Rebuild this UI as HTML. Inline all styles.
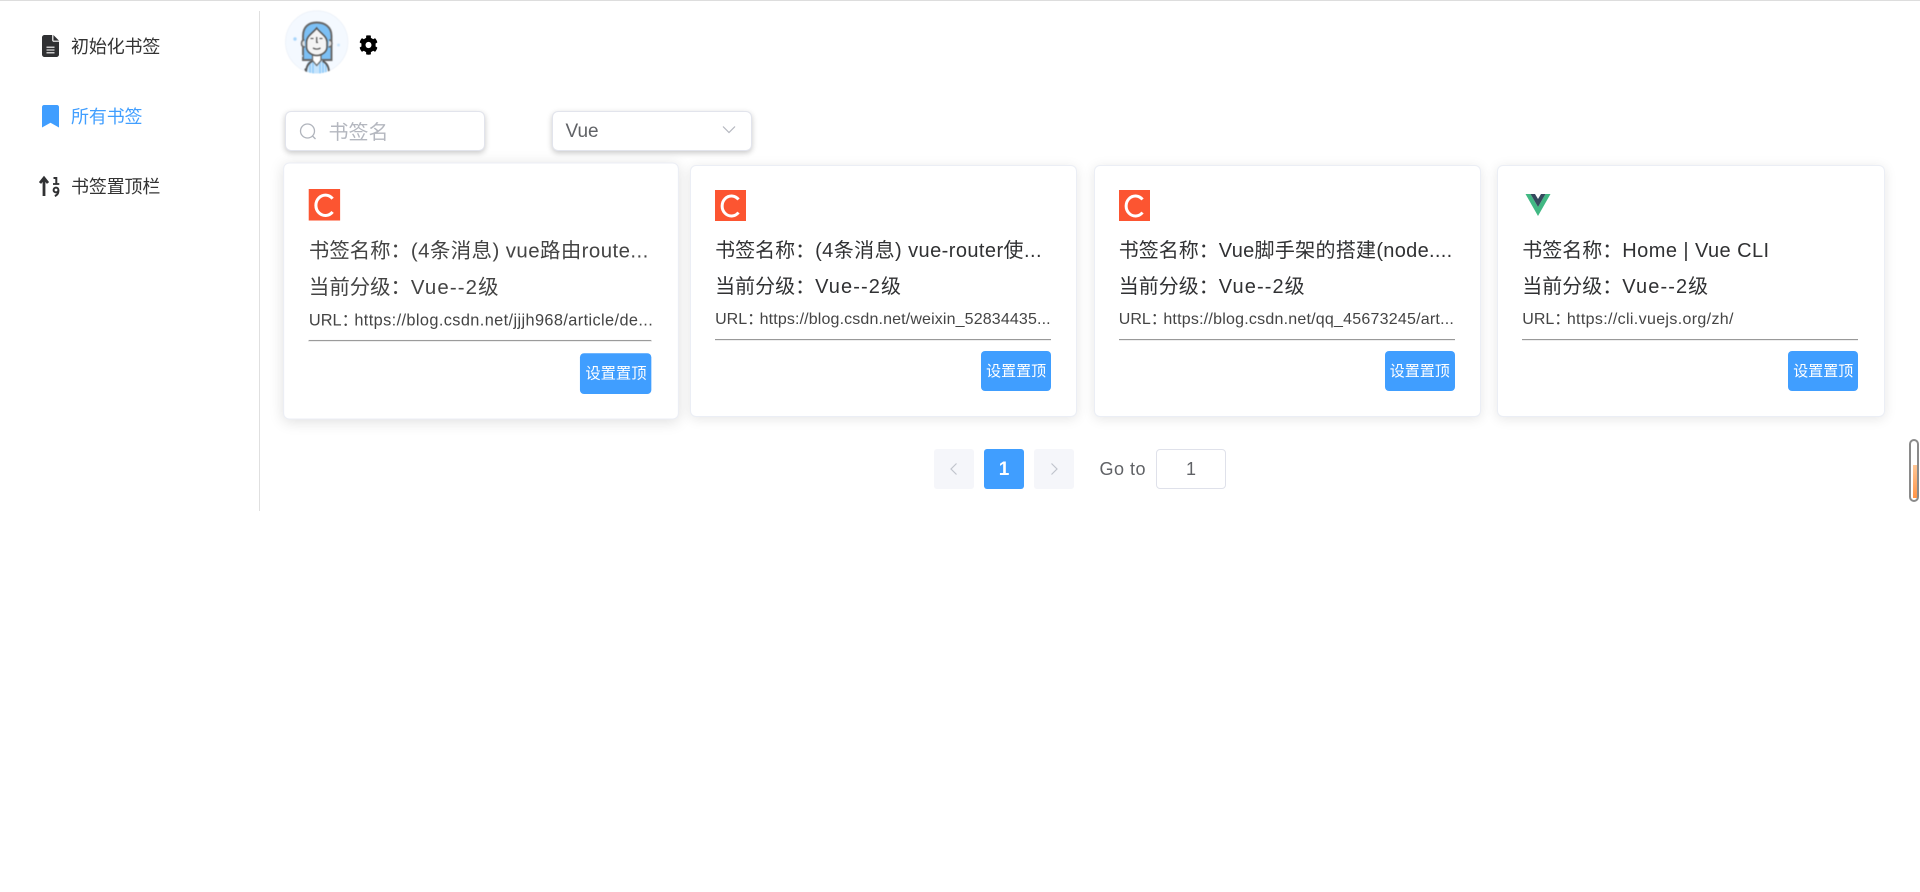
<!DOCTYPE html>
<html lang="zh">
<head>
<meta charset="utf-8">
<title>书签</title>
<style>
html,body{margin:0;padding:0;width:1920px;height:892px;overflow:hidden;background:#fff}
body{position:relative;font-family:"Liberation Sans","Noto Sans CJK SC",sans-serif;color:#303133}
.a,.card,.card>*{position:absolute}
.t{white-space:nowrap}
.nav{left:71px;font-size:18px;letter-spacing:-.15px;line-height:30px;height:30px;white-space:nowrap;color:#333}
.card{top:164.5px;width:385.6px;height:250px;background:#fff;border:1px solid #ebeef5;border-radius:6px;box-shadow:0 2px 12px rgba(0,0,0,.1)}
.ic{left:24.3px;top:24.5px;width:31px;height:31px}
.ti{left:24.3px;top:70.5px;font-size:20px;line-height:30px;white-space:nowrap}
.ti span{letter-spacing:.43px}
.le{left:24.3px;top:106.5px;font-size:20px;line-height:30px;white-space:nowrap}
.le span{letter-spacing:1.1px}
.ur{left:24.3px;top:139.5px;font-size:16px;line-height:30px;white-space:nowrap;color:#444}
.ur b{font-weight:400;margin-right:-3.5px}
.hr{left:24.3px;top:173px;width:336px;height:1px;background:#999;border-bottom:1px solid #eee}
.bt{left:290.3px;top:185.5px;width:70px;height:40px;background:#409eff;color:#fff;border-radius:4px;font-size:15px;line-height:42px;text-align:center;white-space:nowrap}
.inp{top:111px;height:38px;background:#fff;border:1px solid #e2e4ec;border-radius:6px;box-shadow:0 2px 6px rgba(0,0,0,.22)}
.pg{top:449px;width:40px;height:40px;border-radius:3px;background:#f5f6fa}
</style>
</head>
<body>
<div class="a" style="left:0;top:0;width:1920px;height:1px;background:#ddd"></div>
<div class="a" style="left:259px;top:11px;width:1px;height:500px;background:#e0e0e0"></div>

<svg class="a" style="left:41.7px;top:35px" width="17" height="22" viewBox="0 0 17 22"><path fill="#303133" d="M2.500 0H10.200V5.200c0 .9.700 1.600 1.600 1.600H17V19.500c0 1.400-1.100 2.500-2.500 2.500h-12C1.100 22 0 20.900 0 19.500v-17C0 1.100 1.100 0 2.500 0zM11.400 0L17 5.600H11.400z"/><path d="M4.500 12.200h8M4.500 15h8M4.500 17.800h8" stroke="#fff" stroke-width="1.100"/></svg>
<div class="a nav" style="top:32px">初始化书签</div>
<svg class="a" style="left:41.7px;top:105px" width="17" height="22.500" viewBox="0 0 17 22.500"><path fill="#409eff" d="M0 22.500V2C0 .9.900 0 2 0H15c1.100 0 2 .9 2 2V22.500L8.500 17.800Z"/></svg>
<div class="a nav" style="top:102px;color:#409eff">所有书签</div>
<svg class="a" style="left:38px;top:175px" width="23" height="22" viewBox="0 0 23 22"><path d="M6 21V3.500M2 8L6 3l4 5" fill="none" stroke="#303133" stroke-width="2.800"/><path d="M15.500 3h2.800v5.800" fill="none" stroke="#303133" stroke-width="2"/><path d="M15 9h6.300" stroke="#303133" stroke-width="1.800"/><circle cx="18" cy="15" r="2.400" fill="none" stroke="#303133" stroke-width="2"/><path d="M20.400 15.500c0 2.800-1.400 4.800-3.600 5.500" fill="none" stroke="#303133" stroke-width="2"/></svg>
<div class="a nav" style="top:172px">书签置顶栏</div>

<svg class="a" style="left:285px;top:10px;filter:blur(.4px)" width="64" height="64" viewBox="285 10 64 64">
<defs><clipPath id="cl"><circle cx="316.7" cy="42" r="31.5"/></clipPath></defs>
<circle cx="316.7" cy="42" r="31.5" fill="#f4f9ff"/>
<circle cx="316.7" cy="42" r="31.2" fill="none" stroke="#e8eef6" stroke-width=".6"/>
<g clip-path="url(#cl)">
<path d="M303 60V36c0-9 5.500-13.500 13.700-13.500S331.500 27 331.500 36v24z" fill="#7cc0f5" stroke="#666" stroke-width="1.900"/>
<path d="M306 74l1.500-12 9-4 9 4 1.500 12z" fill="#c6e4fc"/>
<path d="M310 62v12M313 60v14M320 60v14M323 62v12M326 63v11" stroke="#86c6f7" stroke-width="1.200"/>
<path d="M306 73c0-6 2-10 6.500-12M329 73c0-6-2-10-6.500-12" fill="none" stroke="#555" stroke-width="1.800"/>
<path d="M312.500 55v5.500l4.200 5 4.300-5V55z" fill="#fff" stroke="#666" stroke-width="1.200"/>
<path d="M306.500 42C306.500 36 313 33 316.700 28 320 33 327 36 327 42V47C327 52 321.500 55.500 316.700 55.500 312 55.500 306.500 52 306.500 47Z" fill="#f4f4f4" stroke="#555" stroke-width="1.500"/>
<path d="M304.500 40c-2 0-3 1-3 3.500s1.500 3.500 3.500 3.500M329 40c2 0 3 1 3 3.500s-1.500 3.500-3.500 3.500" fill="#ddd" stroke="#666" stroke-width="1.400"/>
<path d="M310.500 38.500h3M319.500 38.500h3M316.700 37v5.500h1.300M313 48c2 1.500 5.500 1.500 7.500 0" fill="none" stroke="#444" stroke-width="1.100"/>
</g>
<circle cx="295" cy="39" r="1.700" fill="#a9d6fb"/><circle cx="338.500" cy="45" r="1.500" fill="#cfe8fd"/><circle cx="302" cy="56" r="1" fill="#d5ebfd"/>
<circle cx="305.500" cy="69.500" r="1.100" fill="#555"/>
</svg>
<svg class="a" style="left:359px;top:35px" width="19" height="20" viewBox="0 0 512 512" preserveAspectRatio="none"><path fill="#000" d="M487.4 315.7l-42.6-24.6c4.3-23.2 4.3-47 0-70.2l42.6-24.6c4.9-2.8 7.1-8.6 5.5-14-11.1-35.6-30-67.8-54.7-94.6-3.8-4.1-10-5.1-14.8-2.3L380.8 110c-17.9-15.4-38.5-27.3-60.8-35.1V25.8c0-5.6-3.9-10.5-9.4-11.7-36.7-8.2-74.3-7.8-109.2 0-5.5 1.2-9.4 6.1-9.4 11.7V75c-22.2 7.9-42.8 19.8-60.8 35.1L88.7 85.5c-4.9-2.8-11-1.9-14.8 2.3-24.7 26.7-43.6 58.9-54.7 94.6-1.7 5.4.6 11.2 5.5 14L67.3 221c-4.3 23.2-4.3 47 0 70.2l-42.6 24.6c-4.9 2.8-7.1 8.6-5.5 14 11.1 35.6 30 67.8 54.7 94.6 3.8 4.1 10 5.1 14.8 2.3l42.6-24.6c17.9 15.4 38.5 27.3 60.8 35.1v49.2c0 5.6 3.9 10.5 9.4 11.7 36.7 8.2 74.3 7.8 109.2 0 5.5-1.2 9.4-6.1 9.4-11.700v-49.2c22.2-7.9 42.8-19.8 60.8-35.1l42.6 24.6c4.9 2.8 11 1.9 14.8-2.3 24.7-26.7 43.6-58.9 54.7-94.6 1.5-5.5-.7-11.3-5.6-14.1zM256 336c-44.1 0-80-35.9-80-80s35.9-80 80-80 80 35.9 80 80-35.9 80-80 80z"/></svg>

<div class="a inp" style="left:285px;width:197.500px"></div>
<svg class="a" style="left:298px;top:122px" width="20" height="20" viewBox="0 0 20 20"><circle cx="9.500" cy="9" r="7" fill="none" stroke="#b0b4bc" stroke-width="1.300"/><path d="M14.500 14l3 3" stroke="#b0b4bc" stroke-width="1.300"/></svg>
<div class="a t" style="left:328.500px;top:117px;font-size:20px;line-height:32px;color:#b4b7bf">书签名</div>

<div class="a inp" style="left:552px;width:197.500px"></div>
<div class="a t" style="left:565.500px;top:117px;font-size:19px;line-height:30px;color:#606266">Vue</div>
<svg class="a" style="left:721px;top:124px" width="16" height="12" viewBox="0 0 16 12"><path d="M2 2.500l6 6 6-6" fill="none" stroke="#b5b8c0" stroke-width="1.200"/></svg>

<div class="card" style="left:286.800px;transform:scale(1.02);box-shadow:0 2px 14px rgba(0,0,0,.13)">
<svg class="ic" viewBox="0 0 31 31"><rect width="31" height="31" fill="#fc5531"/><path d="M23.500 9.500A9.300 10 0 1 0 23.500 22.500" fill="none" stroke="#fff" stroke-width="3"/></svg>
<div class="ti" style="color:#444">书签名称：<span>(4条消息) vue路由route...</span></div>
<div class="le" style="color:#444">当前分级：<span>Vue--2级</span></div>
<div class="ur"><b>URL：</b><span style="letter-spacing:.38px">https://blog.csdn.net/jjjh968/article/de...</span></div>
<div class="hr"></div>
<div class="bt">设置置顶</div>
</div>

<div class="card" style="left:689.800px">
<svg class="ic" viewBox="0 0 31 31"><rect width="31" height="31" fill="#fc5531"/><path d="M23.500 9.500A9.300 10 0 1 0 23.500 22.500" fill="none" stroke="#fff" stroke-width="3"/></svg>
<div class="ti">书签名称：<span>(4条消息) vue-router使...</span></div>
<div class="le">当前分级：<span>Vue--2级</span></div>
<div class="ur"><b>URL：</b><span style="letter-spacing:.14px">https://blog.csdn.net/weixin_52834435...</span></div>
<div class="hr"></div>
<div class="bt">设置置顶</div>
</div>

<div class="card" style="left:1093.500px">
<svg class="ic" viewBox="0 0 31 31"><rect width="31" height="31" fill="#fc5531"/><path d="M23.500 9.500A9.300 10 0 1 0 23.500 22.500" fill="none" stroke="#fff" stroke-width="3"/></svg>
<div class="ti">书签名称：<span style="letter-spacing:.3px">Vue脚手架的搭建(node....</span></div>
<div class="le">当前分级：<span>Vue--2级</span></div>
<div class="ur"><b>URL：</b><span style="letter-spacing:.22px">https://blog.csdn.net/qq_45673245/art...</span></div>
<div class="hr"></div>
<div class="bt">设置置顶</div>
</div>

<div class="card" style="left:1497px">
<svg class="ic" viewBox="0 0 31 31"><path fill="#41b883" d="M3.500 4H8.500L16 17 23.500 4H28.500L16 26Z"/><path fill="#35495e" d="M8.500 4H13L16 9 19 4H23.500L16 17Z"/></svg>
<div class="ti">书签名称：<span>Home | Vue CLI</span></div>
<div class="le">当前分级：<span>Vue--2级</span></div>
<div class="ur"><b>URL：</b><span style="letter-spacing:.35px">https://cli.vuejs.org/zh/</span></div>
<div class="hr"></div>
<div class="bt">设置置顶</div>
</div>

<div class="a pg" style="left:934px"></div>
<svg class="a" style="left:949px;top:462px" width="10" height="14" viewBox="0 0 10 14"><path d="M7.500 1.500L2 7l5.500 5.500" fill="none" stroke="#c0c4cc" stroke-width="1.200"/></svg>
<div class="a pg t" style="left:984px;background:#409eff;color:#fff;font-weight:700;font-size:19px;line-height:42px;text-align:center">1</div>
<div class="a pg" style="left:1034px"></div>
<svg class="a" style="left:1049px;top:462px" width="10" height="14" viewBox="0 0 10 14"><path d="M2.500 1.500L8 7l-5.500 5.500" fill="none" stroke="#c0c4cc" stroke-width="1.200"/></svg>
<div class="a t" style="left:1099.500px;top:454px;font-size:18px;letter-spacing:.5px;line-height:30px;color:#606266">Go to</div>
<div class="a t" style="left:1156px;top:449px;width:68px;height:38px;border:1px solid #dfe1ea;border-radius:4px;font-size:18px;line-height:38px;text-align:center;color:#606266">1</div>

<div class="a" style="left:1909px;top:439px;width:6px;height:59px;border:2.500px solid #8a8a8a;border-radius:6px;background:#fff"></div>
<div class="a" style="left:1912.500px;top:465px;width:4px;height:33px;background:linear-gradient(#ffc796,#ff9447)"></div>
</body>
</html>
